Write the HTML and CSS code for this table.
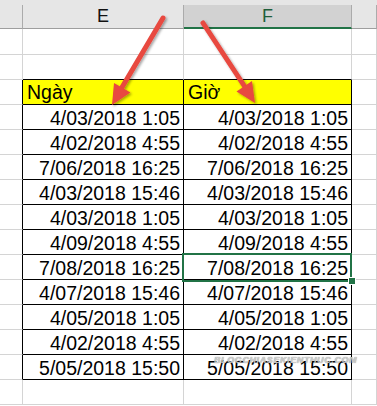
FILE: index.html
```html
<!DOCTYPE html>
<html lang="vi">
<head>
<meta charset="utf-8">
<title>Excel</title>
<link rel="stylesheet" href="styles.css">
</head>
<body>
<div class="sheet">
  <div class="band"></div>
  <div class="grid">
    <div class="h"></div><div class="h">E</div><div class="h hs">F</div><div class="h"></div>

    <div class="c r1"></div><div class="c r1"></div><div class="c r1"></div><div class="c r1"></div>
    <div class="c"></div><div class="c tb"></div><div class="c tb"></div><div class="c"></div>

    <div class="c tl"></div><div class="c t th">Ngày</div><div class="c t th">Giờ</div><div class="c"></div>
    <div class="c tl"></div><div class="c t">4/03/2018 1:05</div><div class="c t">4/03/2018 1:05</div><div class="c"></div>
    <div class="c tl"></div><div class="c t">4/02/2018 4:55</div><div class="c t">4/02/2018 4:55</div><div class="c"></div>
    <div class="c tl"></div><div class="c t">7/06/2018 16:25</div><div class="c t">7/06/2018 16:25</div><div class="c"></div>
    <div class="c tl"></div><div class="c t">4/03/2018 15:46</div><div class="c t">4/03/2018 15:46</div><div class="c"></div>
    <div class="c tl"></div><div class="c t">4/03/2018 1:05</div><div class="c t">4/03/2018 1:05</div><div class="c"></div>
    <div class="c tl"></div><div class="c t">4/09/2018 4:55</div><div class="c t">4/09/2018 4:55</div><div class="c"></div>
    <div class="c tl"></div><div class="c t">7/08/2018 16:25</div><div class="c t">7/08/2018 16:25</div><div class="c"></div>
    <div class="c tl"></div><div class="c t">4/07/2018 15:46</div><div class="c t">4/07/2018 15:46</div><div class="c"></div>
    <div class="c tl"></div><div class="c t">4/05/2018 1:05</div><div class="c t">4/05/2018 1:05</div><div class="c"></div>
    <div class="c tl"></div><div class="c t">4/02/2018 4:55</div><div class="c t">4/02/2018 4:55</div><div class="c"></div>
    <div class="c tl"></div><div class="c t">5/05/2018 15:50</div><div class="c t">5/05/2018 15:50</div><div class="c"></div>

    <div class="c"></div><div class="c"></div><div class="c"></div><div class="c"></div>
  </div>

  <div class="selection"></div>
  <div class="handle"></div>
  <div class="watermark">BLOGCHIASEKIENTHUC.COM</div>

  <svg class="arrows" width="377" height="406" viewBox="0 0 377 406">
    <defs>
      <filter id="sh" x="-20%" y="-20%" width="140%" height="140%">
        <feDropShadow dx="1.5" dy="1.5" stdDeviation="1.2" flood-color="#000" flood-opacity="0.35"/>
      </filter>
    </defs>
    <g filter="url(#sh)" fill="#e8483f" stroke="#e8483f">
      <line x1="163" y1="18" x2="121" y2="89" stroke-width="5" stroke-linecap="round"/>
      <polygon points="112,105 130.5,92.5 114,83" stroke="none"/>
      <line x1="203" y1="23" x2="245" y2="87" stroke-width="5" stroke-linecap="round"/>
      <polygon points="255,103 252,81 236.5,91.5" stroke="none"/>
    </g>
  </svg>
</div>
</body>
</html>
```

FILE: styles.css
```css
html, body {
  margin: 0;
  padding: 0;
  background: #ffffff;
}

.sheet {
  position: relative;
  width: 377px;
  height: 406px;
  overflow: hidden;
  background: #ffffff;
  font-family: "Liberation Sans", Arial, sans-serif;
}

.band {
  height: 5px;
  background: #e6e6e6;
}

.grid {
  display: grid;
  grid-template-columns: 23px 161px 168px 25px;
  grid-template-rows: 24px 26px;
  grid-auto-rows: 25px;
}

.h {
  box-sizing: border-box;
  background: #e6e6e6;
  border-right: 1px solid #ababab;
  border-bottom: 1px solid #9e9e9e;
  font-size: 18px;
  line-height: 23px;
  text-align: center;
  color: #111111;
}

.hs {
  background: #d2d2d2;
  color: #1f5e3a;
  border-bottom: 2px solid #217346;
  line-height: 22px;
}

.c {
  box-sizing: border-box;
  border-right: 1px solid #d4d4d4;
  border-bottom: 1px solid #d4d4d4;
}

.tb {
  border-bottom-color: #000000;
}

.tl {
  border-right-color: #000000;
}

.t {
  border-right-color: #000000;
  border-bottom-color: #000000;
  font-size: 19.5px;
  line-height: 24px;
  padding: 1px 3px 0 0;
  text-align: right;
  color: #000000;
  white-space: nowrap;
}

.th {
  background: #ffff00;
  text-align: left;
  padding: 0 0 0 4px;
}

.selection {
  position: absolute;
  left: 182px;
  top: 253px;
  width: 170px;
  height: 29px;
  box-sizing: border-box;
  border: 2px solid #217346;
}

.handle {
  position: absolute;
  left: 348px;
  top: 277px;
  width: 6px;
  height: 6px;
  background: #217346;
  border: 1px solid #ffffff;
}

.watermark {
  position: absolute;
  left: 214px;
  top: 355px;
  font-size: 9px;
  font-style: italic;
  font-weight: bold;
  letter-spacing: 0.6px;
  color: rgba(215, 215, 215, 0.85);
  text-shadow: 0 0 1px rgba(70, 70, 70, 0.7);
  white-space: nowrap;
}

.arrows {
  position: absolute;
  left: 0;
  top: 0;
  pointer-events: none;
}
```
